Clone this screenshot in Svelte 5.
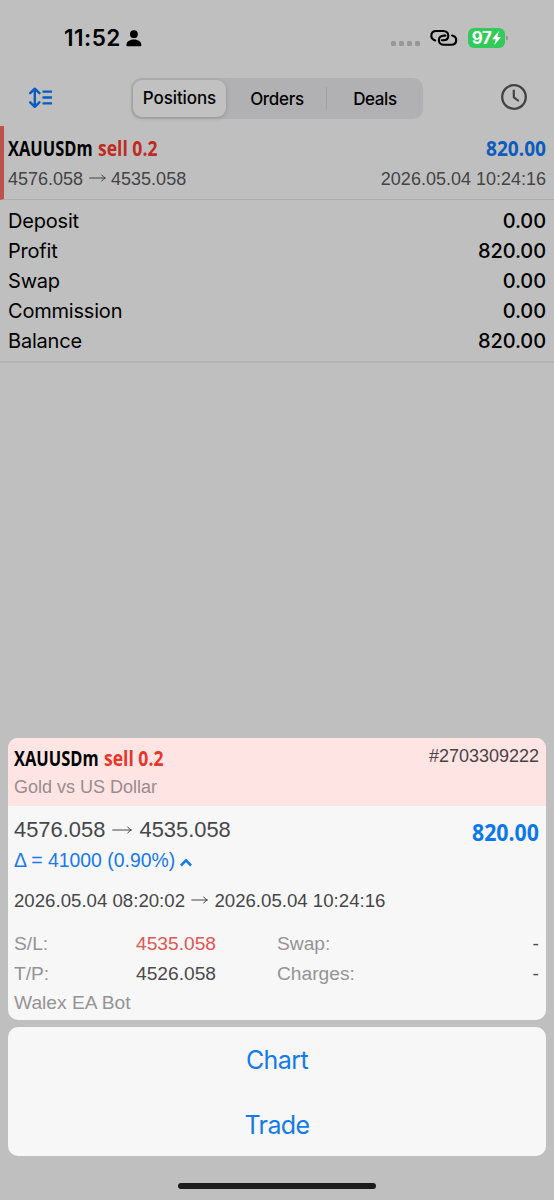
<script>
  const summary = [
    ['Deposit', '0.00'],
    ['Profit', '820.00'],
    ['Swap', '0.00'],
    ['Commission', '0.00'],
    ['Balance', '820.00'],
  ];
</script>

{#snippet arrow(w)}
  <svg class="arrow" width={w} height="10" viewBox="0 0 {w} 10" fill="none" stroke="currentColor" stroke-width="1">
    <path d="M0.3 5H{w - 0.8}M{w - 4.5} 1.6Q{w - 3} 4.2 {w - 0.5} 5Q{w - 3} 5.8 {w - 4.5} 8.4" />
  </svg>
{/snippet}

{#snippet symbol(red)}
  <div class="symbol">
    <svg class="cond" width="85" height="28"><text x="0" y="22" transform="scale(.78 1)" textLength="108.5" lengthAdjust="spacingAndGlyphs" fill="#000">XAUUSDm</text></svg>
    <svg class="cond" width="60" height="28"><text x="0" y="22" transform="scale(.835 1)" textLength="71.2" lengthAdjust="spacingAndGlyphs" fill={red}>sell 0.2</text></svg>
  </div>
{/snippet}

<div class="screen">
  <header class="status">
    <span class="time">11:52</span>
    <svg class="person" width="16" height="17" viewBox="0 0 16 17"><circle cx="7.9" cy="4.2" r="3.9" /><path d="M.4 15C.4 11.6 3.6 9.4 7.9 9.4s7.5 2.2 7.5 5.6c0 .9-.5 1.3-1.4 1.3H1.8C.9 16.3.4 15.900 .4 15z" /></svg>
    <span class="dots"><i></i><i></i><i></i><i></i></span>
    <svg class="link" width="28" height="18" viewBox="0 0 28 18" fill="none" stroke="#000" stroke-width="2.1" stroke-linecap="round">
      <path d="M5.200 11.400C2.600 10.700 1.300 9 1.300 6.800C1.300 3.900 3.300 2 6.200 2H13.200C16.300 2 18.300 4 18.300 6.700C18.300 9.500 16.300 11.200 13.500 11.200H11.800" />
      <path d="M22.100 6.500C24.800 7.100 26.200 8.800 26.200 11.100C26.200 14 24.200 15.800 21.300 15.800H14C11 15.800 8.900 13.900 8.900 11.200C8.900 8.400 10.900 6.600 13.800 6.600H15.400" />
    </svg>
    <span class="battery">
      <b>97</b>
      <svg width="9" height="14" viewBox="0 0 9 14"><path d="M6.600 .4L.5 7.600c-.3.4-.1.700.3.700h3L2.400 13.300c-.1.400.1.400.4.100L8.600 6.600c.3-.4.100-.7-.3-.7H5.400L7 .6c.1-.4-.1-.500-.4-.2z" fill="#fff" /></svg>
    </span>
    <svg class="nub" width="3" height="6"><path d="M0 .5Q2.200 1 2.200 3T0 5.500z" fill="#92979a" /></svg>
  </header>

  <nav class="toolbar">
    <svg class="sort" width="24" height="22" viewBox="0 0 24 22" fill="none" stroke="#0a5cc2" stroke-width="2.400">
      <path d="M5.800 2V19.500M1.200 6.200L5.800 1.700L10.400 6.200M1.200 15.300L5.800 19.800L10.400 15.300" stroke-linejoin="round" stroke-linecap="round" />
      <path d="M13.500 4.600H23M13.500 10.500H23M13.500 16.400H23" />
    </svg>
    <div class="segments">
      <span class="seg active">Positions</span>
      <span class="seg">Orders</span>
      <span class="divider"></span>
      <span class="seg last">Deals</span>
    </div>
    <svg class="clock" width="28" height="28" viewBox="0 0 28 28" fill="none" stroke="#434343">
      <circle cx="14" cy="14" r="11.800" stroke-width="2.300" />
      <path d="M13.800 7.500V14.300L18 17.500" stroke-width="2.200" stroke-linecap="round" stroke-linejoin="round" />
    </svg>
  </nav>

  <section class="position">
    <div class="row top">
      {@render symbol('#bf2a22')}
      <svg class="cond" width="60" height="28"><text x="0" y="22" textLength="60" lengthAdjust="spacingAndGlyphs" fill="#0c5bbd">820.00</text></svg>
    </div>
    <div class="row sub">
      <span class="prices">4576.058 {@render arrow(17)} 4535.058</span>
      <span>2026.05.04 10:24:16</span>
    </div>
  </section>

  <section class="summary">
    {#each summary as [label, value]}
      <div class="row"><span>{label}</span><span class="value">{value}</span></div>
    {/each}
  </section>

  <div class="spacer"></div>

  <section class="card detail">
    <div class="head">
      <div>
        {@render symbol('#e8352a')}
        <p class="name">Gold vs US Dollar</p>
      </div>
      <span class="ticket">#2703309222</span>
    </div>
    <div class="body">
      <div class="row quote">
        <span class="prices">4576.058 {@render arrow(20)} 4535.058</span>
        <svg class="cond big" width="67" height="32"><text x="0" y="26" textLength="67" lengthAdjust="spacingAndGlyphs" fill="#0a78ec">820.00</text></svg>
      </div>
      <div class="delta">
        <span>Δ = 41000 (0.90%)</span>
        <svg width="12" height="9" viewBox="0 0 12 9" fill="none" stroke="currentColor" stroke-width="2.600"><path d="M.9 7.500L6 2.400L11.100 7.500" /></svg>
      </div>
      <div class="dates">2026.05.04 08:20:02 {@render arrow(17)} 2026.05.04 10:24:16</div>
      <div class="grid">
        <span>S/L:</span><span class="num stop">4535.058</span><span>Swap:</span><span class="dash">-</span>
        <span>T/P:</span><span class="num">4526.058</span><span>Charges:</span><span class="dash">-</span>
        <span class="comment">Walex EA Bot</span>
      </div>
    </div>
  </section>

  <section class="card actions">
    <button>Chart</button>
    <button>Trade</button>
  </section>

  <div class="home"></div>
</div>

<style>
  :global(body) { background: #bfbfbf; }
  .screen {
    box-sizing: border-box; width: 554px; height: 1200px; overflow: hidden;
    display: flex; flex-direction: column; background: #bfbfbf;
    font-family: "Liberation Sans", Arial, sans-serif; color: #000;
  }
  svg { display: block; flex: none; }
  .row { display: flex; justify-content: space-between; }
  .symbol { display: flex; gap: 5px; }
  .status { display: flex; align-items: center; height: 76px; padding-left: 64px; flex: none; }
  .time { font: 600 22.5px/30px Inter, sans-serif; width: 62px; letter-spacing: .5px; white-space: nowrap; }
  .person { margin-top: 1px; }
  .dots { display: flex; gap: 3px; margin: 11px 0 0 249px; }
  .dots i { width: 5px; height: 5px; border-radius: 1.500px; background: #979797; }
  .link { margin-left: 10px; }
  .battery {
    display: flex; align-items: center; justify-content: center; width: 37px; height: 20px;
    margin-left: 10px; border-radius: 6px; background: #32ca58; color: #fff;
  }
  .battery b { font: 700 17px/20px Inter, sans-serif; letter-spacing: -.5px; margin-right: 1px; }
  .nub { margin-left: 1px; }
  .toolbar { display: flex; align-items: center; height: 46px; padding: 0 26px 4px 29px; flex: none; }
  .sort { margin-top: -3px; }
  .clock { margin: -4px 0 0 auto; }
  .segments {
    box-sizing: border-box; display: flex; align-items: center; width: 292px; height: 41px;
    margin: -1px 0 0 78px; padding: 2px 0 2px 2px; border-radius: 10px; background: #b1b1b4;
  }
  .seg { box-sizing: border-box; flex: none; width: 98px; text-align: center; font: 500 17px/36px Inter, sans-serif; letter-spacing: -.3px; }
  .active { width: 93px; height: 37px; line-height: 37px; margin-right: 2px; letter-spacing: -.1px; border-radius: 9px; background: #c1c1c1; box-shadow: 0 1px 4px rgba(0,0,0,.18); }
  .last { width: 96px; letter-spacing: -.4px; }
  .divider { width: 1px; height: 23px; background: #a1a1a6; }
  .position {
    box-sizing: border-box; height: 74px; padding: 8px 8px 0 4px; margin-top: 4px; flex: none;
    border-left: 4px solid #bd514c; border-bottom: 1px solid #adadae;
  }
  .toolbar { margin-bottom: -4px; }
  .cond { font: 700 21px "Open Sans", sans-serif; overflow: visible; }
  .big { font-size: 24px; }
  .sub { font-size: 18px; line-height: 22px; margin-top: 6px; color: #444447; white-space: nowrap; }
  .arrow { display: inline-block; margin: 0 1px; vertical-align: 2px; }
  .sub .arrow { margin: 0 .5px; }
  .summary { padding: 6px 8px 5px; border-bottom: 2px solid #b4b4b4; font: 400 20px/30px Inter, sans-serif; letter-spacing: -.2px; flex: none; }
  .value { font-weight: 500; letter-spacing: -.1px; }
  .spacer { flex: 1; }
  .card { margin: 0 8px; border-radius: 10px; background: #f7f7f7; overflow: hidden; flex: none; }
  .detail { height: 282px; }
  .head { box-sizing: border-box; display: flex; justify-content: space-between; height: 68px; padding: 6px 7px 0 6px; background: #ffe4e4; }
  .name { margin: 4px 0 0; font-size: 18px; line-height: 22px; color: #9a8c8c; }
  .ticket { font-size: 18px; line-height: 24px; color: #4a4345; }
  .body { padding: 9px 7px 0 6px; color: #47474a; }
  .quote { height: 30px; font-size: 21.900px; line-height: 29px; }
  .delta { display: flex; align-items: center; gap: 5px; font-size: 19.400px; line-height: 30px; color: #1879ed; }
  .delta svg { margin-top: 4px; }
  .dates { margin-top: 13px; font-size: 18.650px; line-height: 26px; white-space: nowrap; }
  .grid { display: grid; grid-template-columns: 122px 141px 1fr auto; margin-top: 15px; font-size: 19.200px; line-height: 29.500px; color: #949496; }
  .num, .dash { color: #4b4b4e; }
  .stop { color: #df5853; }
  .comment { grid-column: 1 / -1; }
  .actions { height: 129px; margin-top: 7px; }
  button { display: block; width: 100%; height: 64.500px; border: 0; padding: 0; background: none; color: #147aeb; font: 400 25px/66px Inter, sans-serif; letter-spacing: -.6px; }
  .home { width: 198px; height: 6px; margin: 27px auto 11px; border-radius: 3px; background: #1b1b1b; flex: none; }
</style>
